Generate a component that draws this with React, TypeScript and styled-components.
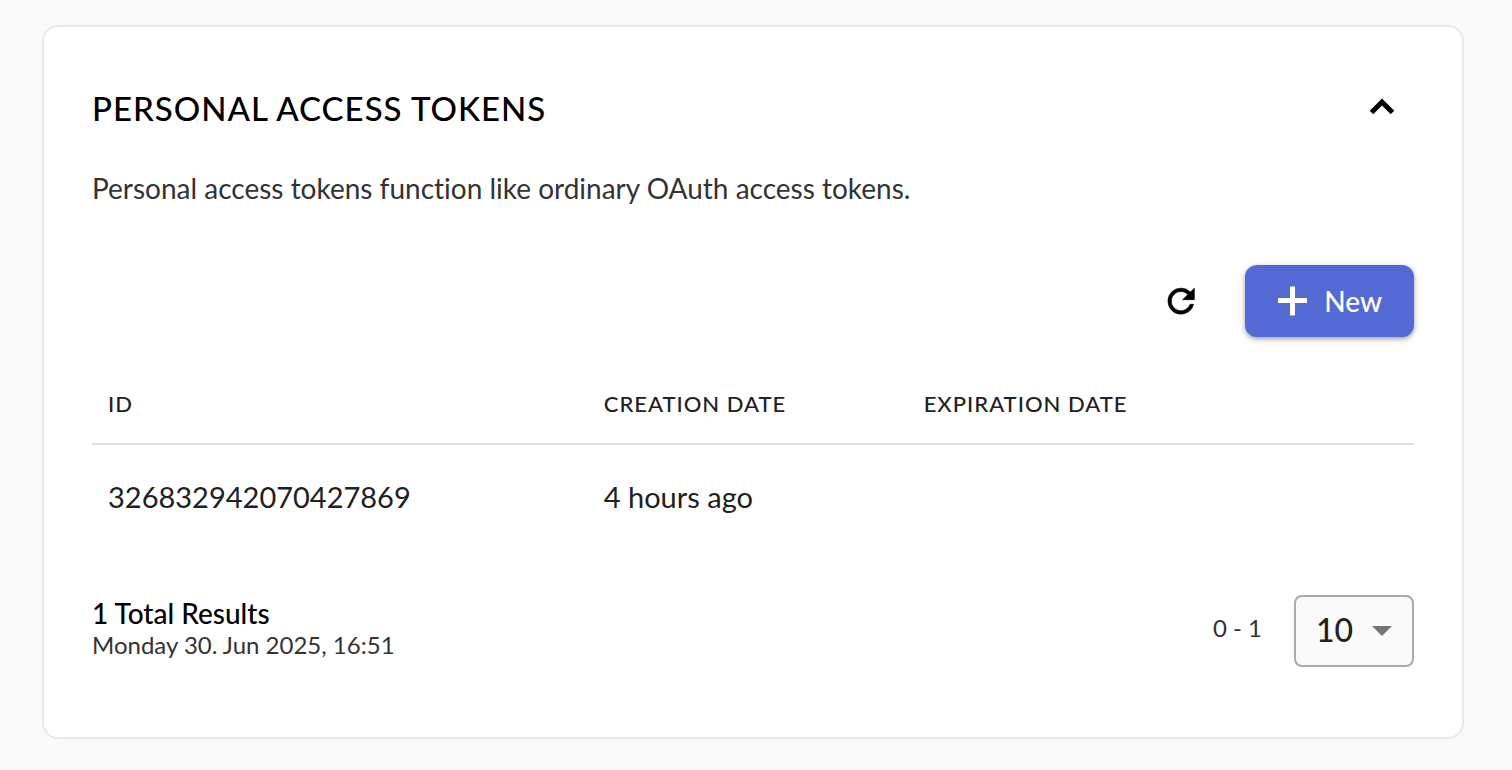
import React, { useState } from "react";
import styled, { createGlobalStyle } from "styled-components";

const GlobalStyle = createGlobalStyle`
  *, *::before, *::after { box-sizing: border-box; }
  body {
    margin: 0;
    background: #fafafa;
    color: #000;
    font-family: Lato, "Liberation Sans", sans-serif;
    font-variant-ligatures: none;
  }
`;

const Page = styled.main`
  padding: 25px 48px 31px 42px;
`;

const Card = styled.section`
  padding: 48px 48px 70px;
  background: #fff;
  border: 2px solid #e9e9e9;
  border-radius: 16px;
`;

const CardHeader = styled.header`
  display: flex;
  align-items: flex-start;
  justify-content: space-between;
  height: 64px;
`;

const Title = styled.h2`
  margin: 0;
  font-size: 33px;
  line-height: 66px;
  font-weight: 500;
  letter-spacing: 1px;
  text-transform: uppercase;
`;

const IconButton = styled.button`
  display: flex;
  align-items: center;
  justify-content: center;
  width: 64px;
  height: 64px;
  padding: 0;
  border: 0;
  background: none;
  color: #000;
  cursor: pointer;
`;

const Description = styled.p`
  margin: 31px 0 0;
  font-size: 28px;
  line-height: 36px;
  color: #333;
`;

const Actions = styled.div`
  display: flex;
  align-items: center;
  justify-content: flex-end;
  gap: 32px;
  margin-top: 59px;
`;

const NewButton = styled.button`
  display: flex;
  align-items: center;
  gap: 8px;
  height: 72px;
  padding: 0 32px 0 23px;
  border: 0;
  border-radius: 12px;
  background: #5469d4;
  color: #fff;
  font: 500 28px/36px Lato, "Liberation Sans", sans-serif;
  box-shadow: 0 2px 4px rgba(0, 0, 0, 0.3), 0 2px 10px rgba(0, 0, 0, 0.1);
  cursor: pointer;
`;

const TokenTable = styled.table`
  width: 100%;
  margin-top: 27px;
  border-collapse: collapse;
  table-layout: fixed;
  text-align: left;
`;

const HeadCell = styled.th<{ $width: string }>`
  width: ${(p) => p.$width};
  height: 80px;
  padding: 0 16px;
  border-bottom: 2px solid #e0e0e0;
  font-size: 22px;
  font-weight: 500;
  letter-spacing: 1px;
  text-transform: uppercase;
  color: #212121;
`;

const Cell = styled.td`
  height: 104px;
  padding: 0 16px;
  font-size: 29px;
  font-weight: 400;
  color: #212121;
`;

const Footer = styled.footer`
  display: flex;
  align-items: flex-start;
  justify-content: space-between;
  margin-top: 47px;
`;

const Summary = styled.div`
  padding-top: 2px;
`;

const Total = styled.p`
  margin: 0;
  font-size: 28px;
  line-height: 32px;
  font-weight: 500;
`;

const Timestamp = styled.p`
  margin: 0;
  font-size: 24px;
  line-height: 32px;
  color: #333;
`;

const Paging = styled.div`
  display: flex;
  align-items: flex-start;
  gap: 32px;
`;

const Range = styled.span`
  font-size: 24px;
  line-height: 66px;
  color: #333;
`;

const SelectBox = styled.div`
  display: grid;
  align-items: center;
  width: 120px;
  height: 72px;
  border: 2px solid #aaa;
  border-radius: 8px;
  background: #fafafa;

  & > * { grid-area: 1 / 1; }
  & > svg { justify-self: end; margin-right: 20px; pointer-events: none; }
`;

const Select = styled.select`
  width: 100%;
  height: 100%;
  padding: 0 20px 2px;
  border: 0;
  appearance: none;
  background: none;
  color: #212121;
  font: 500 32px/40px Lato, "Liberation Sans", sans-serif;
`;

export default function App() {
  const [open, setOpen] = useState(true);
  return (
    <>
      <GlobalStyle />
      <Page>
        <Card>
          <CardHeader>
            <Title>Personal Access Tokens</Title>
            <IconButton aria-label="Toggle section" aria-expanded={open} onClick={() => setOpen(!open)}>
              <svg width="48" height="48" viewBox="0 0 48 48" fill="none" stroke="currentColor" strokeWidth="5">
                <path d={open ? "M13.5 29.5L24 19L34.5 29.5" : "M13.5 19L24 29.5L34.5 19"} />
              </svg>
            </IconButton>
          </CardHeader>
          {open && (
            <>
              <Description>Personal access tokens function like ordinary OAuth access tokens.</Description>
              <Actions>
                <IconButton aria-label="Refresh">
                  <svg width="40" height="40" viewBox="0 0 24 24" fill="currentColor" stroke="currentColor" strokeWidth="0.4">
                    <path d="M17.65 6.65A7.7 7.7 0 0 0 12 4.3a7.8 7.8 0 1 0 7.53 9.7h-2.08A5.8 5.8 0 1 1 12 6.3c1.6 0 3.04.69 4.12 1.78L13 11.2h7V4.3z" />
                  </svg>
                </IconButton>
                <NewButton>
                  <svg width="48" height="48" viewBox="0 0 48 48" fill="none" stroke="currentColor" strokeWidth="5">
                    <path d="M24.5 9.5v29M10 23.5h29" />
                  </svg>
                  New
                </NewButton>
              </Actions>
              <TokenTable>
                <thead>
                  <tr>
                    <HeadCell scope="col" $width="37.5%">ID</HeadCell>
                    <HeadCell scope="col" $width="24.2%">Creation Date</HeadCell>
                    <HeadCell scope="col" $width="38.3%">Expiration Date</HeadCell>
                  </tr>
                </thead>
                <tbody>
                  <tr>
                    <Cell>326832942070427869</Cell>
                    <Cell>4 hours ago</Cell>
                    <Cell />
                  </tr>
                </tbody>
              </TokenTable>
              <Footer>
                <Summary>
                  <Total>1 Total Results</Total>
                  <Timestamp>Monday 30. Jun 2025, 16:51</Timestamp>
                </Summary>
                <Paging>
                  <Range>0 - 1</Range>
                  <SelectBox>
                    <Select aria-label="Results per page" defaultValue="10">
                      <option>10</option>
                      <option>20</option>
                      <option>50</option>
                    </Select>
                    <svg width="20" height="10" viewBox="0 0 20 10" fill="#757575">
                      <path d="M0 0h20L10 10z" />
                    </svg>
                  </SelectBox>
                </Paging>
              </Footer>
            </>
          )}
        </Card>
      </Page>
    </>
  );
}
